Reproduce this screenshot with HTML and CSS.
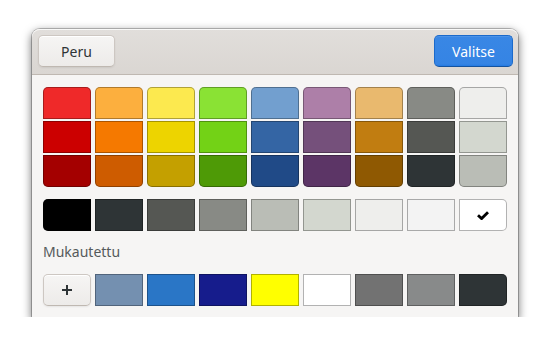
FILE: index.html
```html
<!DOCTYPE html>
<html lang="fi">
<head>
  <meta charset="UTF-8" />
  <title>Valitse väri</title>
  <link rel="stylesheet" href="styles.css">
</head>
<body>
  <div class="dialog">
    <div class="headerbar">
      <button class="btn">Peru</button>
      <button class="btn btn-suggested">Valitse</button>
    </div>

    <div class="content">
      <div class="palette">
        <div class="column">
          <div class="swatch" style="background:#ef2929"></div>
          <div class="swatch" style="background:#cc0000"></div>
          <div class="swatch" style="background:#a40000"></div>
        </div>
        <div class="column">
          <div class="swatch" style="background:#fcaf3e"></div>
          <div class="swatch" style="background:#f57900"></div>
          <div class="swatch" style="background:#ce5c00"></div>
        </div>
        <div class="column">
          <div class="swatch" style="background:#fce94f"></div>
          <div class="swatch" style="background:#edd400"></div>
          <div class="swatch" style="background:#c4a000"></div>
        </div>
        <div class="column">
          <div class="swatch" style="background:#8ae234"></div>
          <div class="swatch" style="background:#73d216"></div>
          <div class="swatch" style="background:#4e9a06"></div>
        </div>
        <div class="column">
          <div class="swatch" style="background:#729fcf"></div>
          <div class="swatch" style="background:#3465a4"></div>
          <div class="swatch" style="background:#204a87"></div>
        </div>
        <div class="column">
          <div class="swatch" style="background:#ad7fa8"></div>
          <div class="swatch" style="background:#75507b"></div>
          <div class="swatch" style="background:#5c3566"></div>
        </div>
        <div class="column">
          <div class="swatch" style="background:#e9b96e"></div>
          <div class="swatch" style="background:#c17d11"></div>
          <div class="swatch" style="background:#8f5902"></div>
        </div>
        <div class="column">
          <div class="swatch" style="background:#888a85"></div>
          <div class="swatch" style="background:#555753"></div>
          <div class="swatch" style="background:#2e3436"></div>
        </div>
        <div class="column">
          <div class="swatch" style="background:#eeeeec"></div>
          <div class="swatch" style="background:#d3d7cf"></div>
          <div class="swatch" style="background:#babdb6"></div>
        </div>
      </div>

      <div class="row grays">
        <div class="swatch" style="background:#000000"></div>
        <div class="swatch" style="background:#2e3436"></div>
        <div class="swatch" style="background:#555753"></div>
        <div class="swatch" style="background:#888a85"></div>
        <div class="swatch" style="background:#babdb6"></div>
        <div class="swatch" style="background:#d3d7cf"></div>
        <div class="swatch" style="background:#eeeeec"></div>
        <div class="swatch" style="background:#f3f3f3"></div>
        <div class="swatch selected" style="background:#ffffff">
          <svg width="12" height="9" viewBox="0 0 12 9">
            <polyline points="1,4.2 4.6,7.6 11,1.2" fill="none" stroke="#000" stroke-width="2.8" />
          </svg>
        </div>
      </div>

      <div class="label">Mukautettu</div>

      <div class="row custom">
        <button class="btn add-btn">
          <svg width="10" height="10" viewBox="0 0 10 10">
            <path d="M5 0v10M0 5h10" stroke="#2e3436" stroke-width="2" />
          </svg>
        </button>
        <div class="swatch" style="background:#7490b0"></div>
        <div class="swatch" style="background:#2a76c6"></div>
        <div class="swatch" style="background:#161c8c"></div>
        <div class="swatch" style="background:#ffff00"></div>
        <div class="swatch" style="background:#ffffff"></div>
        <div class="swatch" style="background:#727272"></div>
        <div class="swatch" style="background:#888a8a"></div>
        <div class="swatch" style="background:#2e3436"></div>
      </div>
    </div>
  </div>
</body>
</html>
```

FILE: styles.css
```css
body {
  margin: 0;
  background: #ffffff;
  font-family: "Noto Sans", "Open Sans", sans-serif;
  font-size: 14px;
  color: #2e3436;
}

.dialog {
  width: 486px;
  margin: 29px 0 0 32px;
  background: #f6f5f4;
  border-radius: 8px 8px 0 0;
  box-shadow: 0 3px 9px 1px rgba(0,0,0,0.5), 0 0 0 1px rgba(0,0,0,0.23);
}

.headerbar {
  display: flex;
  justify-content: space-between;
  padding: 6px 5px 7px 6px;
  height: 32px;
  background: linear-gradient(to top, #dad6d2, #e1dedb);
  border-bottom: 1px solid #bfb8b1;
  border-radius: 8px 8px 0 0;
  box-shadow: inset 0 1px rgba(255,255,255,0.8);
}

.btn {
  font-family: inherit;
  font-size: 14px;
  color: #2e3436;
  height: 32px;
  width: 77px;
  padding: 0;
  border: 1px solid #cdc7c2;
  border-bottom-color: #bfb8b1;
  border-radius: 5px;
  background: linear-gradient(to top, #edebe9, #f6f5f4);
  box-shadow: inset 0 1px white, 0 1px 2px rgba(0,0,0,0.07);
}

.btn-suggested {
  width: 79px;
  color: #ffffff;
  border-color: #1b6acb;
  border-bottom-color: #15539e;
  background: linear-gradient(to top, #2379e2, #3584e4 2px, #3987e5);
  box-shadow: inset 0 1px rgba(255,255,255,0.1);
}

.content {
  padding: 12px 11px 11px 11px;
}

.palette {
  display: flex;
  gap: 4px;
}

.column {
  display: flex;
  flex-direction: column;
  gap: 2px;
}

.swatch {
  width: 48px;
  height: 32px;
  box-shadow: inset 0 0 0 1px rgba(0,0,0,0.3);
  display: flex;
  align-items: center;
  justify-content: center;
}

.column .swatch:first-child {
  border-radius: 5px 5px 0 0;
}

.column .swatch:last-child {
  border-radius: 0 0 5px 5px;
}

.row {
  display: flex;
  gap: 4px;
}

.grays {
  margin-top: 12px;
}

.row .swatch:first-child {
  border-radius: 5px 0 0 5px;
}

.row .swatch:last-child {
  border-radius: 0 5px 5px 0;
}

.label {
  margin: 11px 0 12px 0;
  line-height: 20px;
  color: #555a5b;
}

.add-btn {
  width: 48px;
  display: flex;
  align-items: center;
  justify-content: center;
}
```
